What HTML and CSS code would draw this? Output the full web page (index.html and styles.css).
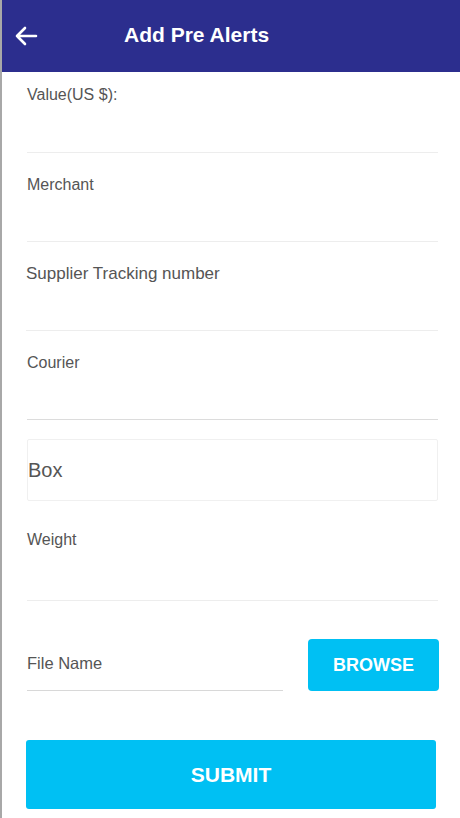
FILE: index.html
```html
<!DOCTYPE html>
<html lang="en">
<head>
    <meta charset="UTF-8">
    <meta name="viewport" content="width=device-width, initial-scale=1.0">
    <title>Add Pre Alerts</title>
    <link rel="stylesheet" href="styles.css">
</head>
<body>
    <div class="header">
        <svg class="back" width="24" height="20" viewBox="0 0 24 20">
            <path d="M22 10H3M11 2L3 10L11 18" fill="none" stroke="#fff" stroke-width="2.6" stroke-linecap="round" stroke-linejoin="round"/>
        </svg>
        <h1>Add Pre Alerts</h1>
    </div>

    <div class="form">
        <div class="field first">Value(US $):</div>
        <div class="field">Merchant</div>
        <div class="field tracking">Supplier Tracking number</div>
        <div class="field courier">Courier</div>
        <div class="box">Box</div>
        <div class="field weight">Weight</div>

        <div class="fileRow">
            <div class="fileName">File Name</div>
            <button class="browse">BROWSE</button>
        </div>

        <button class="submit">SUBMIT</button>
    </div>
</body>
</html>
```

FILE: styles.css
```css
body {
    margin: 0;
    font-family: "Liberation Sans", Arial, sans-serif;
    background-color: #fff;
    border-left: 2px solid #a8a8a8;
    min-height: 818px;
    box-sizing: border-box;
}
.header {
    height: 72px;
    background-color: #2c2e8e;
    display: flex;
    align-items: center;
    padding-left: 12px;
}
.back {
    display: block;
}
.header h1 {
    margin: 0 0 2px 86px;
    color: #fff;
    font-size: 21px;
    font-weight: bold;
}
.form {
    padding: 0 22px 0 25px;
}
.field {
    height: 89px;
    box-sizing: border-box;
    padding-top: 22px;
    border-bottom: 1px solid #ededed;
    color: #555;
    font-size: 16px;
    line-height: 20px;
}
.field.first {
    height: 81px;
    padding-top: 13px;
}
.field.tracking {
    margin-left: -1px;
    font-size: 17px;
}
.courier {
    border-bottom-color: #dcdcdc;
}
.box {
    margin-top: 19px;
    height: 62px;
    box-sizing: border-box;
    border: 1px solid #f0f0f0;
    border-radius: 2px;
    display: flex;
    align-items: center;
    color: #555;
    font-size: 20px;
}
.field.weight {
    height: 100px;
    padding-top: 29px;
}
.fileRow {
    display: flex;
    justify-content: space-between;
    margin-top: 38px;
}
.fileName {
    width: 256px;
    height: 52px;
    box-sizing: border-box;
    padding-top: 14px;
    border-bottom: 1px solid #d8d8d8;
    color: #555;
    font-size: 16.5px;
    line-height: 20px;
}
.browse {
    width: 131px;
    height: 52px;
    margin-right: -1px;
    border: none;
    border-radius: 4px;
    background-color: #00c0f3;
    color: #fff;
    font-family: "Liberation Sans", Arial, sans-serif;
    font-size: 18px;
    font-weight: bold;
}
.submit {
    display: block;
    width: 410px;
    height: 69px;
    margin: 49px 0 0 -1px;
    border: none;
    border-radius: 3px;
    background-color: #00c0f3;
    color: #fff;
    font-family: "Liberation Sans", Arial, sans-serif;
    font-size: 21px;
    font-weight: bold;
}
```
